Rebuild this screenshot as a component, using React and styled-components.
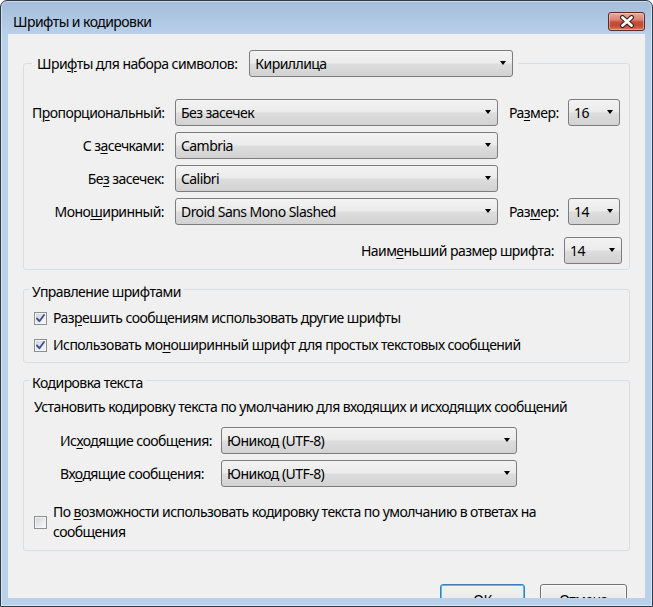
import React from "react";
import styled, { createGlobalStyle } from "styled-components";

const GlobalStyle = createGlobalStyle`
  html, body { margin: 0; padding: 0; background: #ffffff; }
  body {
    font-family: "Noto Sans", "Open Sans", sans-serif;
    font-size: 14px;
    letter-spacing: -0.55px;
    color: #000;
  }
  * { box-sizing: border-box; }
`;

const Window = styled.div`
  width: 653px;
  height: 607px;
  border: 1px solid #2f3a47;
  border-radius: 7px 7px 0 0;
  background: linear-gradient(#a3bdda 0px, #b6cee8 30px, #b9d1ea 40px, #b9d1ea 100%);
  box-shadow: inset 0 0 0 1px rgba(255, 255, 255, 0.45);
  display: flex;
  flex-direction: column;
  padding: 0 7px 8px 7px;
  overflow: hidden;
`;

const TitleBar = styled.div`
  height: 33px;
  flex: none;
  display: flex;
  align-items: flex-start;
  padding: 11px 0 0 5px;
`;

const Title = styled.div`
  line-height: 20px;
  color: #000;
`;

const CloseButton = styled.div`
  margin-left: auto;
  width: 37px;
  height: 19px;
  border: 1px solid #5a2c24;
  border-radius: 3px;
  background: linear-gradient(#e9a99a 0%, #d98576 40%, #c4503d 52%, #c24a35 75%, #d77a5e 100%);
  box-shadow: inset 0 0 0 1px rgba(255, 220, 210, 0.45);
  display: flex;
  align-items: center;
  justify-content: center;
`;

const Client = styled.div`
  flex: 1;
  background: #f0f0f0;
  overflow: hidden;
  padding: 16px 15px 0 15px;
  display: flex;
  flex-direction: column;
`;

const Group = styled.fieldset`
  margin: ${(p) => p.$mt || 0}px 0 0 0;
  padding: 0;
  min-width: 0;
  border: 1px solid #d5dfe5;
  border-radius: 3px;
`;

const Legend = styled.legend`
  margin-left: ${(p) => (p.$wide ? 8 : 5)}px;
  padding: ${(p) => (p.$wide ? "0 5px" : "6px 3px 0")};
  line-height: 20px;
  display: flex;
  align-items: center;
  gap: 12px;
`;

const GroupBody = styled.div`
  padding: ${(p) => p.$pad};
  display: flex;
  flex-direction: column;
`;

const FontRow = styled.div`
  display: grid;
  grid-template-columns: 132px 323px 48px 52px;
  column-gap: 11px;
  align-items: center;
  margin-top: ${(p) => (p.$first ? 0 : 6)}px;
`;

const Label = styled.span`
  line-height: 20px;
  white-space: nowrap;
  text-align: ${(p) => (p.$right ? "right" : "left")};
`;

const Mn = styled.span`
  text-decoration: underline;
  text-underline-offset: 2px;
  text-decoration-thickness: 1px;
`;

const Select = styled.div`
  width: ${(p) => (p.$w ? `${p.$w}px` : "auto")};
  height: 27px;
  border: 1px solid #7c7c7c;
  border-radius: 3px;
  background: linear-gradient(#f3f3f3 0%, #ebebeb 48%, #dddddd 52%, #d2d2d2 100%);
  display: flex;
  align-items: center;
  padding: 0 6px 0 5px;
  line-height: 20px;
  white-space: nowrap;
`;

const SelectText = styled.span`
  flex: 1;
  overflow: hidden;
`;

const Arrow = styled.span`
  width: 0;
  height: 0;
  border-left: 3.5px solid transparent;
  border-right: 3.5px solid transparent;
  border-top: 4px solid #000;
  margin-top: -2px;
`;

const MinSizeRow = styled.div`
  display: flex;
  justify-content: flex-end;
  align-items: center;
  gap: 10px;
  margin-top: 12px;
  padding-right: 7px;
`;

const CheckRow = styled.label`
  display: flex;
  align-items: center;
  gap: 6px;
  line-height: 20px;
  margin-top: ${(p) => p.$mt || 0}px;
  max-width: ${(p) => (p.$max ? `${p.$max}px` : "none")};
`;

const Box = styled.span`
  flex: none;
  width: 13px;
  height: 13px;
  border: 1px solid #8e8f8f;
  background: linear-gradient(135deg, #cfd2d6 0%, #e6e7e9 50%, #fbfbfb 100%);
  box-shadow: inset 0 0 0 1px #f4f4f4;
  display: flex;
  align-items: center;
  justify-content: center;
`;

const Text = styled.div`
  line-height: 20px;
`;

const EncRow = styled.div`
  display: grid;
  grid-template-columns: 150px 296px;
  column-gap: 11px;
  align-items: center;
  margin-left: 26px;
  margin-top: ${(p) => p.$mt}px;
`;

const ButtonRow = styled.div`
  display: flex;
  justify-content: flex-end;
  gap: 15px;
  margin-top: 33px;
  padding-right: 3px;
`;

const Button = styled.div`
  width: ${(p) => p.$w}px;
  height: 30px;
  flex: none;
  border: 1px solid ${(p) => (p.$default ? "#3c7fb1" : "#707070")};
  border-radius: 3px;
  background: linear-gradient(#f2f2f2 0%, #ebebeb 48%, #dddddd 52%, #cfcfcf 100%);
  box-shadow: ${(p) => (p.$default ? "inset 0 0 0 1px #4fc0f5" : "inset 0 0 0 1px #fbfbfb")};
  display: flex;
  align-items: flex-start;
  justify-content: center;
  padding-top: 5px;
  line-height: 20px;
`;

function Dropdown({ value, w }) {
  return (
    <Select $w={w}>
      <SelectText>{value}</SelectText>
      <Arrow />
    </Select>
  );
}

function Checkbox({ checked }) {
  return (
    <Box>
      {checked && (
        <svg width="11" height="11" viewBox="0 0 11 11">
          <path d="M2 5.5 L4.4 8.2 L9 2" fill="none" stroke="#3f538f" strokeWidth="1.9" strokeLinecap="round" strokeLinejoin="round" />
        </svg>
      )}
    </Box>
  );
}

export default function App() {
  return (
    <>
      <GlobalStyle />
      <Window>
        <TitleBar>
          <Title>Шрифты и кодировки</Title>
          <CloseButton>
            <svg width="16" height="13" viewBox="0 0 16 13">
              <path d="M3.5 2.5 L12.5 10.5 M12.5 2.5 L3.5 10.5" stroke="#43201a" strokeWidth="5" strokeLinecap="round" />
              <path d="M3.5 2.5 L12.5 10.5 M12.5 2.5 L3.5 10.5" stroke="#ffffff" strokeWidth="2.8" strokeLinecap="round" />
            </svg>
          </CloseButton>
        </TitleBar>
        <Client>
          <Group>
            <Legend $wide>
              <Label>
                Шри<Mn>ф</Mn>ты для набора символов:
              </Label>
              <Dropdown value="Кириллица" w={264} />
            </Legend>
            <GroupBody $pad="22px 0 5px 8px">
              <FontRow $first>
                <Label $right>
                  П<Mn>р</Mn>опорциональный:
                </Label>
                <Dropdown value="Без засечек" />
                <Label>
                  Ра<Mn>з</Mn>мер:
                </Label>
                <Dropdown value="16" />
              </FontRow>
              <FontRow>
                <Label $right>
                  С з<Mn>а</Mn>сечками:
                </Label>
                <Dropdown value="Cambria" />
              </FontRow>
              <FontRow>
                <Label $right>
                  Бе<Mn>з</Mn> засечек:
                </Label>
                <Dropdown value="Calibri" />
              </FontRow>
              <FontRow>
                <Label $right>
                  Моно<Mn>ш</Mn>иринный:
                </Label>
                <Dropdown value="Droid Sans Mono Slashed" />
                <Label>
                  Раз<Mn>м</Mn>ер:
                </Label>
                <Dropdown value="14" />
              </FontRow>
              <MinSizeRow>
                <Label>
                  Наим<Mn>е</Mn>ньший размер шрифта:
                </Label>
                <Dropdown value="14" w={58} />
              </MinSizeRow>
            </GroupBody>
          </Group>

          <Group $mt={6}>
            <Legend>Управление шрифтами</Legend>
            <GroupBody $pad="6px 0 7px 10px">
              <CheckRow>
                <Checkbox checked />
                <Text>
                  Раз<Mn>р</Mn>ешить сообщениям использовать другие шрифты
                </Text>
              </CheckRow>
              <CheckRow $mt={7}>
                <Checkbox checked />
                <Text>
                  Использовать мо<Mn>н</Mn>оширинный шрифт для простых текстовых сообщений
                </Text>
              </CheckRow>
            </GroupBody>
          </Group>

          <Group $mt={4}>
            <Legend>Кодировка текста</Legend>
            <GroupBody $pad="4px 0 8px 10px">
              <Text>Установить кодировку текста по умолчанию для входящих и исходящих сообщений</Text>
              <EncRow $mt={10}>
                <Label>
                  Ис<Mn>х</Mn>одящие сообщения:
                </Label>
                <Dropdown value="Юникод (UTF-8)" />
              </EncRow>
              <EncRow $mt={6}>
                <Label>
                  Вх<Mn>о</Mn>дящие сообщения:
                </Label>
                <Dropdown value="Юникод (UTF-8)" />
              </EncRow>
              <CheckRow $mt={15} $max={540}>
                <Checkbox />
                <Text>
                  По <Mn>в</Mn>озможности использовать кодировку текста по умолчанию в ответах на сообщения
                </Text>
              </CheckRow>
            </GroupBody>
          </Group>

          <ButtonRow>
            <Button $w={85} $default>
              ОК
            </Button>
            <Button $w={87}>Отмена</Button>
          </ButtonRow>
        </Client>
      </Window>
    </>
  );
}
